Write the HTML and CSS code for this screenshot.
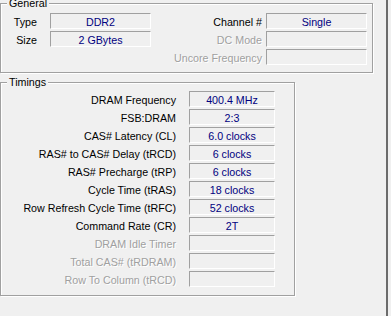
FILE: index.html
```html
<!DOCTYPE html>
<html lang="en">
<head>
    <meta charset="UTF-8">
    <title>Memory</title>
    <link rel="stylesheet" href="styles.css">
</head>
<body>
    <div class="window">
        <div class="group general">
            <span class="group-title">General</span>
            <div class="general-grid">
                <span class="label label-left">Type</span>
                <span class="field">DDR2</span>
                <span class="label">Channel #</span>
                <span class="field">Single</span>

                <span class="label label-left">Size</span>
                <span class="field">2 GBytes</span>
                <span class="label disabled">DC Mode</span>
                <span class="field"></span>

                <span></span>
                <span></span>
                <span class="label disabled">Uncore Frequency</span>
                <span class="field"></span>
            </div>
        </div>

        <div class="group timings">
            <span class="group-title">Timings</span>
            <div class="timings-grid">
                <span class="label">DRAM Frequency</span>
                <span class="field">400.4 MHz</span>
                <span class="label">FSB:DRAM</span>
                <span class="field">2:3</span>
                <span class="label">CAS# Latency (CL)</span>
                <span class="field">6.0 clocks</span>
                <span class="label">RAS# to CAS# Delay (tRCD)</span>
                <span class="field">6 clocks</span>
                <span class="label">RAS# Precharge (tRP)</span>
                <span class="field">6 clocks</span>
                <span class="label">Cycle Time (tRAS)</span>
                <span class="field">18 clocks</span>
                <span class="label">Row Refresh Cycle Time (tRFC)</span>
                <span class="field">52 clocks</span>
                <span class="label">Command Rate (CR)</span>
                <span class="field">2T</span>
                <span class="label disabled">DRAM Idle Timer</span>
                <span class="field"></span>
                <span class="label disabled">Total CAS# (tRDRAM)</span>
                <span class="field"></span>
                <span class="label disabled">Row To Column (tRCD)</span>
                <span class="field"></span>
            </div>
        </div>
    </div>
</body>
</html>
```

FILE: styles.css
```css
html, body {
    margin: 0;
    padding: 0;
    background: #f0f0f0;
}
body {
    font-family: "Liberation Sans", Arial, sans-serif;
    font-size: 10.7px;
    color: #000;
}
.window {
    width: 388px;
    height: 316px;
    padding-top: 3px;
    box-sizing: border-box;
    border-right: 2px solid #6b6b6b;
    background: #f0f0f0;
}
.group {
    position: relative;
    border: 1px solid #a0a0a0;
    box-shadow: 1px 1px 0 #fff, inset 1px 1px 0 #fff;
}
.group-title {
    position: absolute;
    top: -7px;
    left: 6px;
    padding: 0 2px;
    line-height: 13px;
    background: #f0f0f0;
}
.general {
    width: 373px;
    box-sizing: border-box;
    padding: 9px 5px 7px 0;
}
.timings {
    width: 295px;
    box-sizing: border-box;
    margin-top: 9px;
    padding: 8px 19px 8px 0;
}
.general-grid {
    display: grid;
    grid-template-columns: 49px 101px 1fr 101px;
    row-gap: 2px;
}
.timings-grid {
    display: grid;
    grid-template-columns: 1fr 86px;
    column-gap: 13px;
    row-gap: 2px;
}
.label {
    height: 16px;
    padding-top: 1px;
    box-sizing: border-box;
    line-height: 16px;
    text-align: right;
    white-space: nowrap;
}
.general .label {
    padding-right: 4px;
}
.general .label-left {
    padding-right: 13px;
}
.disabled {
    color: #a0a0a0;
    text-shadow: 1px 1px 0 #fff;
}
.field {
    height: 16px;
    box-sizing: border-box;
    border-top: 1px solid #a0a0a0;
    border-left: 1px solid #a0a0a0;
    border-right: 1px solid #fff;
    border-bottom: 1px solid #fff;
    padding-top: 1px;
    line-height: 14px;
    text-align: center;
    color: #000080;
    white-space: nowrap;
}
```
